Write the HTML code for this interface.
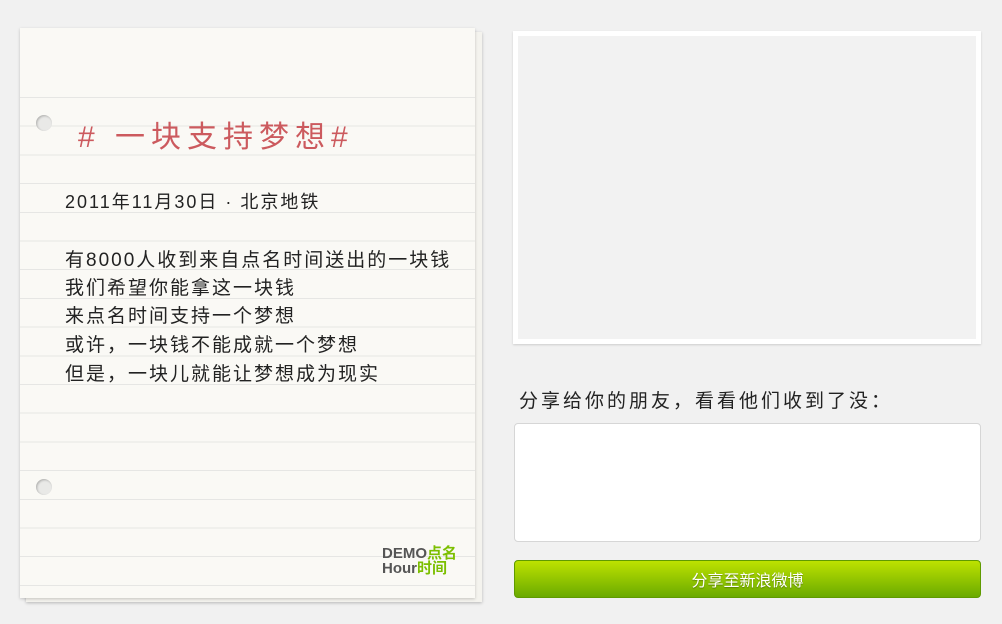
<!DOCTYPE html>
<html><head><meta charset="utf-8"><style>
body{margin:0;width:1002px;height:624px;background:#f1f1f1;position:relative;overflow:hidden;font-family:"Liberation Sans","WenQuanYi Zen Hei","Noto Sans CJK SC",sans-serif}
.sheet2{position:absolute;left:26px;top:32px;width:456px;height:570px;background:#f4f3ee;box-shadow:0 1px 3px rgba(0,0,0,.25)}
.sheet{position:absolute;left:20px;top:28px;width:455px;height:570px;background:#faf9f5;box-shadow:0 1px 3px rgba(0,0,0,.2)}
.lines{position:absolute;left:0;top:69px;width:455px;height:490px;
background-image:repeating-linear-gradient(to bottom,#e6e6e4 0,#e6e6e4 1px,transparent 1px,transparent 28.7px)}
.hole{position:absolute;left:16px;width:16px;height:16px;border-radius:50%;background:#e9e9e7;box-shadow:inset 1px 1px 2px rgba(0,0,0,.25)}
.t{position:absolute;white-space:nowrap;color:#222}
.title{left:58px;top:84px;font-size:30px;color:#cc5a5e;letter-spacing:6px}
.body{left:45px;font-size:19px;letter-spacing:2px}
.frame{position:absolute;left:513px;top:31px;width:458px;height:303px;border:5px solid #fff;background:#f2f2f2;box-shadow:0 1px 2px rgba(0,0,0,.15)}
.lbl{position:absolute;left:519px;top:386px;font-size:19px;color:#222;letter-spacing:3px}
.ta{position:absolute;left:514px;top:423px;width:465px;height:117px;background:#fff;border:1px solid #d6d6d6;border-radius:4px}
.btn{position:absolute;left:514px;top:560px;width:465px;height:36px;border:1px solid #5f9a00;border-radius:4px;background:linear-gradient(#bde200,#6aaa00);color:#fff;font-size:16px;text-align:center;line-height:36px;text-shadow:0 1px 1px rgba(0,0,0,.3);font-family:"Noto Sans CJK SC",sans-serif}
.logo{position:absolute;left:362px;top:518px;font-weight:bold;font-size:15px;line-height:15px;color:#555;font-family:"Liberation Sans","Noto Sans CJK SC",sans-serif}
.logo span{color:#7cbf00}
</style></head><body>
<div class="sheet2"></div>
<div class="sheet">
<div class="lines"></div>
<div class="hole" style="top:87px"></div>
<div class="hole" style="top:451px"></div>
<div class="t title">#&nbsp;一块支持梦想#</div>
<div class="t body" style="top:160px;font-size:18px">2011年11月30日 · 北京地铁</div>
<div class="t body" style="top:217px">有8000人收到来自点名时间送出的一块钱</div>
<div class="t body" style="top:245px">我们希望你能拿这一块钱</div>
<div class="t body" style="top:273px">来点名时间支持一个梦想</div>
<div class="t body" style="top:302px">或许，一块钱不能成就一个梦想</div>
<div class="t body" style="top:331px">但是，一块儿就能让梦想成为现实</div>
<div class="logo">DEMO<span>点名</span><br>Hour<span>时间</span></div>
</div>
<div class="frame"></div>
<div class="lbl">分享给你的朋友，看看他们收到了没：</div>
<div class="ta"></div>
<div class="btn">分享至新浪微博</div>
</body></html>
